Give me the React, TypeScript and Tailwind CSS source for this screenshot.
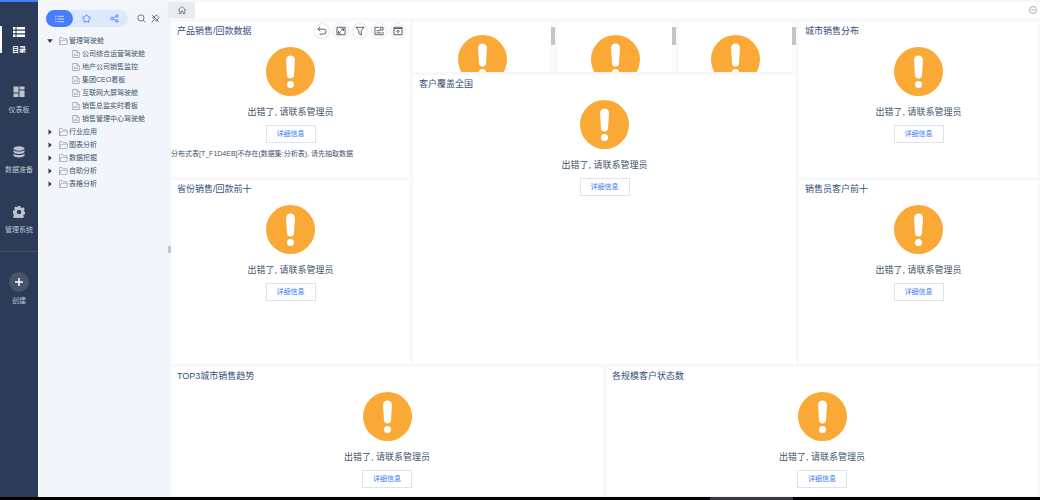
import React from "react";

function Alert() {
  return (
    <svg viewBox="0 0 98 98" className="block h-[49px] w-[49px] shrink-0" aria-hidden="true">
      <circle cx="49" cy="49" r="49" fill="#faa937" />
      <path d="M40 26a9 9 0 0 1 18 0l-2 30a7 7 0 0 1-14 0z" fill="#fff" />
      <circle cx="49" cy="75" r="7" fill="#fff" />
    </svg>
  );
}

function ErrorBody({ message }: { message?: string }) {
  return (
    <>
      <div className="flex flex-col items-center pt-[7px]">
        <Alert />
        <p className="mt-2 text-[9px] leading-[16px] text-[#44546a]">出错了, 请联系管理员</p>
        <button className="mt-[5px] h-[18px] w-[50px] border border-[#dfe4ea] bg-white text-[7px] leading-[16px] text-[#3d7bf7]">
          详细信息
        </button>
      </div>
      {message && <p className="mt-[5px] text-[7px] leading-[12px] text-[#44546a]">{message}</p>}
    </>
  );
}

function Card({
  title,
  grow,
  message,
  tools,
}: {
  title: string;
  grow: string;
  message?: string;
  tools?: React.ReactNode;
}) {
  return (
    <section className={`${grow} min-h-0 min-w-0 basis-0 overflow-hidden bg-white`}>
      <header className="flex h-[18px] items-center justify-between pr-[5px] pl-[6px]">
        <h2 className="text-[9px] leading-[18px] text-[#35507a]">{title}</h2>
        {tools}
      </header>
      <ErrorBody message={message} />
    </section>
  );
}

function MiniCard({ grow }: { grow: string }) {
  return (
    <section className={`${grow} flex min-w-0 basis-0 overflow-hidden bg-white`}>
      <div className="flex flex-1 justify-center pt-[13px]">
        <Alert />
      </div>
      <div className="w-[4px] bg-[#f9fafb] pt-[5px]">
        <div className="h-[18px] bg-[#c4c4c4]" />
      </div>
    </section>
  );
}

const toolIcons: { label: string; d: string }[] = [
  { label: "撤销", d: "M5 1.500L1.500 5L5 8.500M1.500 5H10.500a4 4 0 0 1 0 8H4" },
  { label: "放大", d: "M1.500 2H14.500V14H1.500ZM8.500 4.500H12V8M12 4.500L8.500 8M4 8V11.500H7.500M4 11.500L7 8.500" },
  { label: "筛选", d: "M1.500 2H14.500L10 7.500V14.500L6 12V7.500Z" },
  { label: "导出", d: "M8 2H1.500V14H14.500V9.500M4 7.500H9.500M4 11H12M10 2H14.500V6.500H10Z" },
  { label: "上传", d: "M1.500 2H14.500V14H1.500ZM1.500 4H14.500M8 12V6.500M5.500 9L8 6.500L10.500 9" },
];

function Tools() {
  return (
    <div className="flex gap-[5px]">
      {toolIcons.map((t) => (
        <button
          key={t.label}
          aria-label={t.label}
          className="flex h-[14px] w-[14px] items-center justify-center rounded-full bg-white shadow-[0_0_3px_rgba(0,0,0,0.2)]"
        >
          <svg viewBox="0 0 16 16" className="h-[10px] w-[10px] shrink-0" fill="none" stroke="#4d5561" strokeWidth="1.500">
            <path d={t.d} />
          </svg>
        </button>
      ))}
    </div>
  );
}

function NavItem({ label, active, children }: { label: string; active?: boolean; children: React.ReactNode }) {
  return (
    <a href="#" className={`flex w-full flex-col items-center ${active ? "text-white" : "text-[#bcc4d0]"}`}>
      <svg viewBox="0 0 24 24" className="h-[12px] w-[12px]" fill="currentColor">
        {children}
      </svg>
      <span className={`mt-[6px] text-[7px] leading-[12px] ${active ? "font-bold" : ""}`}>{label}</span>
    </a>
  );
}

function Rail() {
  return (
    <nav className="flex w-[38px] shrink-0 flex-col border-t-2 border-[#467cfd] bg-[#2c3c58]">
      <div className="relative mt-[24px] flex flex-col gap-[30px] border-b border-[#43516b] pb-[15px]">
        <span className="absolute top-0 left-0 h-[27px] w-[2px] bg-white" />
        <NavItem label="目录" active>
          <path d="M0 2h5v5H0zM7 2h17v5H7zM0 9.500h5v5H0zM7 9.500h17v5H7zM0 17h5v5H0zM7 17h17v5H7z" />
        </NavItem>
        <NavItem label="仪表板">
          <path d="M1 1h10v12H1zM13 1h10v6H13zM1 15h10v7H1zM13 9h10v13H13z" />
        </NavItem>
        <NavItem label="数据准备">
          <ellipse cx="12" cy="5" rx="11" ry="4.500" />
          <path d="M1 8c3 4 19 4 22 0v4c-2 5-20 5-22 0zM1 15c3 4 19 4 22 0v4c-2 5-20 5-22 0z" />
        </NavItem>
        <NavItem label="管理系统">
          <path
            fillRule="evenodd"
            d="M9.500 0h5l1 3.300 2 .9 3-1.700 3 3.600-1.700 3 .7 2 2 1v4l-3.200 1-.9 2 1.600 3-3.500 2.800-3-1.600-1.500.8-1 2.900h-4l-1-2.900-2-.8-3 1.600-3-3.300 1.700-3-.8-2L0 14.500v-5l2.900-1 .9-2-1.500-3L5.500.9l3 1.500zM12 7.500a4.500 4.500 0 1 0 0 9a4.500 4.500 0 0 0 0-9z"
          />
        </NavItem>
      </div>
      <button className="mt-[20px] flex flex-col items-center text-[#bcc4d0]">
        <span className="flex h-[20px] w-[20px] items-center justify-center rounded-full bg-[#46546c]">
          <svg viewBox="0 0 10 10" className="h-[10px] w-[10px]" stroke="#fff" strokeWidth="1.500">
            <path d="M5 1V9M1 5H9" />
          </svg>
        </span>
        <span className="mt-[3px] text-[7px] leading-[12px]">创建</span>
      </button>
    </nav>
  );
}

function Folder({ label, open }: { label: string; open?: boolean }) {
  return (
    <a href="#" className="flex h-[13px] items-center pl-[9px]">
      <svg viewBox="0 0 10 10" className="h-[6px] w-[6px]" fill="#333e4e">
        {open ? <path d="M0.500 2H9.500L5 8.500Z" /> : <path d="M2.500 0.500V9.500L8 5Z" />}
      </svg>
      <svg viewBox="0 0 18 16" className="ml-[6px] h-[8px] w-[9px]" fill="none" stroke="#9aa3b2" strokeWidth="1.500">
        <path d="M1 15V1H6.500L8.500 3.500H15.500V6M1 15L4 6.500H17.500L15.500 15Z" />
      </svg>
      <span className="ml-[1px]">{label}</span>
    </a>
  );
}

function Doc({ label }: { label: string }) {
  return (
    <a href="#" className="flex h-[13px] items-center pl-[34px]">
      <svg viewBox="0 0 16 16" className="h-[8px] w-[8px]" fill="none" stroke="#8f99a9" strokeWidth="1.500">
        <path d="M1.500 1H10L14.500 5.500V15H1.500ZM10 1V5.500H14.500M5 12V8.500M8 12V7M11 12V9.500" />
      </svg>
      <span className="ml-[2px]">{label}</span>
    </a>
  );
}

function Tree() {
  const docs = ["公司综合运营驾驶舱", "地产公司销售监控", "集团CEO看板", "互联网大屏驾驶舱", "销售总监实时看板", "销售管理中心驾驶舱"];
  const folders = ["行业应用", "图表分析", "数据挖掘", "自助分析", "表格分析"];
  return (
    <aside className="w-[130px] shrink-0 bg-[#f2f5fa] pt-[8px]">
      <div className="flex items-center pl-2">
        <div className="flex h-[17px] w-[82px] rounded-full bg-[#dde8fc] text-[#467cfd]">
          <button aria-label="列表" className="flex w-[27px] items-center justify-center rounded-full bg-[#467cfd] text-white">
            <svg viewBox="0 0 18 16" className="h-[8px] w-[9px]" stroke="currentColor" strokeWidth="1.500">
              <path d="M0 2.500H3M5 2.500H18M0 8H3M5 8H18M0 13.500H3M5 13.500H18" />
            </svg>
          </button>
          <button aria-label="收藏" className="flex w-[27px] items-center justify-center">
            <svg viewBox="0 0 16 16" className="h-[9px] w-[9px]" fill="none" stroke="currentColor" strokeWidth="1.500" strokeLinejoin="round">
              <path d="M8 1L10.500 4.500L15 6L12.300 9.700V14.500L8 13.300L3.700 14.500V9.700L1 6L5.500 4.500Z" />
            </svg>
          </button>
          <button aria-label="分享" className="flex w-[28px] items-center justify-center">
            <svg viewBox="0 0 16 16" className="h-[9px] w-[9px]" fill="none" stroke="currentColor" strokeWidth="1.500">
              <circle cx="3.500" cy="8" r="2.500" />
              <circle cx="12.500" cy="3.500" r="2.200" />
              <circle cx="12.500" cy="12.500" r="2.200" />
              <path d="M5.800 7L10.500 4.500M5.800 9L10.500 11.500" />
            </svg>
          </button>
        </div>
        <button aria-label="搜索" className="ml-[9px]">
          <svg viewBox="0 0 16 16" className="h-[9px] w-[9px]" fill="none" stroke="#5a6472" strokeWidth="1.500">
            <circle cx="7" cy="7" r="5.500" />
            <path d="M11 11L15 15" />
          </svg>
        </button>
        <button aria-label="固定" className="ml-[5px]">
          <svg viewBox="0 0 16 16" className="h-[9px] w-[9px]" fill="none" stroke="#5a6472" strokeWidth="1.500">
            <path d="M9.500 1.500L14.500 6.500L12 8.500L10 13L3 6L7.500 4ZM5.500 10.500L1 15M2 2L14 14" />
          </svg>
        </button>
      </div>
      <div className="mt-[7px] text-[7px] leading-[13px] text-[#44546a]">
        <Folder label="管理驾驶舱" open />
        {docs.map((d) => (
          <Doc key={d} label={d} />
        ))}
        {folders.map((f) => (
          <Folder key={f} label={f} />
        ))}
      </div>
    </aside>
  );
}

export default function App() {
  return (
    <div className="flex h-screen flex-col overflow-hidden bg-black font-['Liberation_Sans','Noto_Sans_CJK_SC',sans-serif]">
      <div className="flex min-h-0 flex-1">
        <Rail />
        <div className="flex min-w-0 flex-1 border-t-2 border-[#f5f7fa]">
          <Tree />
          <main className="flex min-w-0 flex-1 flex-col bg-[#f7f8fb]">
            <div className="flex h-[16px] shrink-0 items-center justify-between bg-white pr-[3px]">
              <button aria-label="主页" className="flex h-full w-[27px] items-center justify-center bg-[#e9ebee]">
                <svg viewBox="0 0 16 16" className="h-[8px] w-[8px]" fill="none" stroke="#5a6472" strokeWidth="1.500">
                  <path d="M0.500 8L8 1L15.500 8M2.500 7V15H6V10.500H10V15H13.500V7" />
                </svg>
              </button>
              <button aria-label="收起">
                <svg viewBox="0 0 16 16" className="h-[8px] w-[8px]" fill="none" stroke="#8a929d" strokeWidth="1.500">
                  <circle cx="8" cy="8" r="7" />
                  <path d="M4.500 8H11.500" />
                </svg>
              </button>
            </div>
            <div className="flex min-h-0 flex-1">
              <div className="flex w-[3px] shrink-0 items-center bg-[#f2f5fa] pb-4">
                <div className="h-[7px] w-full bg-[#c3c7ce]" />
              </div>
              <div className="flex min-w-0 flex-1 flex-col gap-[3px] pt-[4px] pr-[2px] pb-px">
                <div className="flex min-h-0 flex-[342] gap-[3px]">
                  <div className="flex min-w-0 flex-[239] flex-col gap-[3px]">
                    <Card
                      title="产品销售/回款数据"
                      grow="grow-[155]"
                      tools={<Tools />}
                      message="分布式表[T_F1D4EB]不存在(数据集:分析表), 请先抽取数据"
                    />
                    <Card title="省份销售/回款前十" grow="grow-[183]" />
                  </div>
                  <div className="flex min-w-0 flex-[383] flex-col gap-[3px]">
                    <div className="flex h-[50px] shrink-0 gap-[3px]">
                      <MiniCard grow="grow-[142]" />
                      <MiniCard grow="grow-[118]" />
                      <MiniCard grow="grow-[117]" />
                    </div>
                    <Card title="客户覆盖全国" grow="grow" />
                  </div>
                  <div className="flex min-w-0 flex-[239] flex-col gap-[3px]">
                    <Card title="城市销售分布" grow="grow-[155]" />
                    <Card title="销售员客户前十" grow="grow-[183]" />
                  </div>
                </div>
                <div className="flex min-h-0 flex-[129] gap-[3px]">
                  <Card title="TOP3城市销售趋势" grow="grow" />
                  <Card title="各规模客户状态数" grow="grow" />
                </div>
              </div>
            </div>
          </main>
        </div>
      </div>
      <footer className="flex h-[3px] shrink-0">
        <div className="flex-[710]" />
        <div className="flex-[83] bg-[#3a3a3e]" />
        <div className="flex-[247]" />
      </footer>
    </div>
  );
}
